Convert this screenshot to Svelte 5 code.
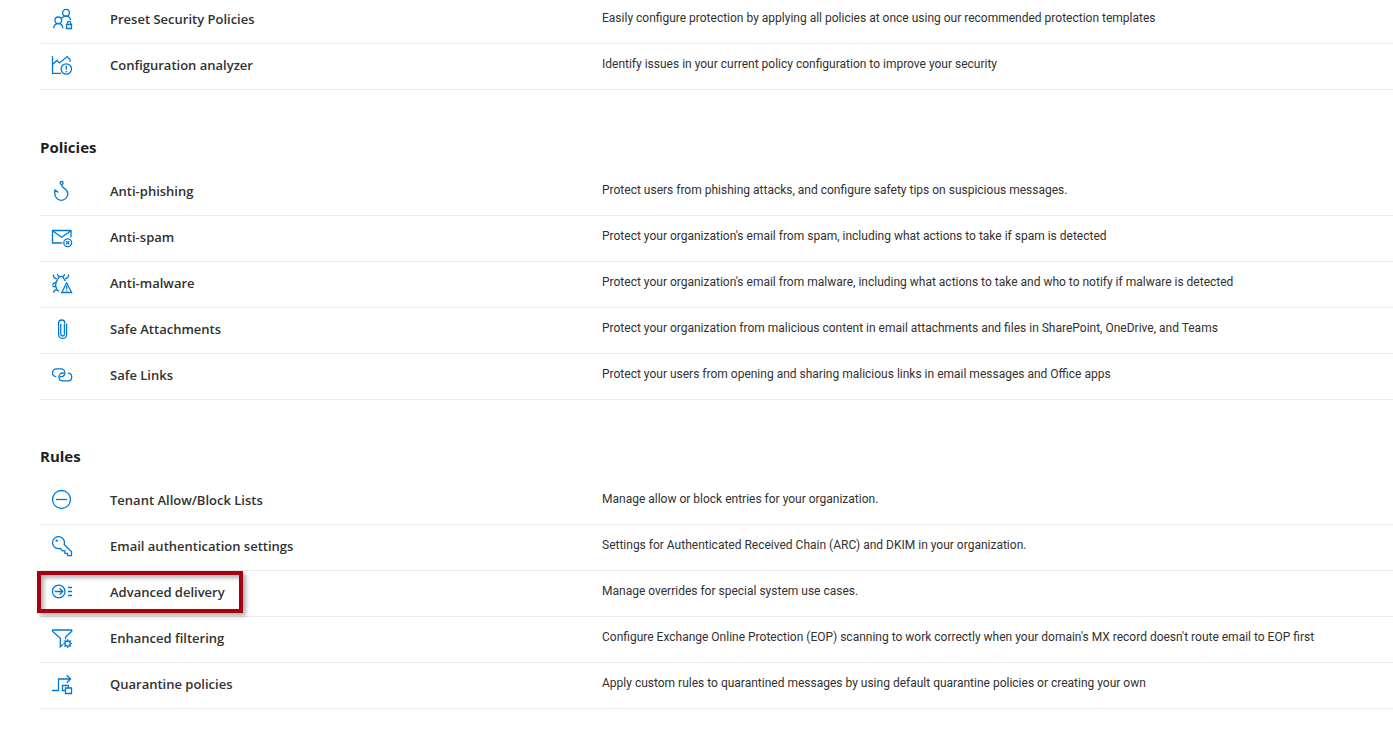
<script>
  const sections = [
    {
      title: "",
      rows: [
        { icon: "preset", name: "Preset Security Policies", text: "Easily configure protection by applying all policies at once using our recommended protection templates" },
        { icon: "analyzer", name: "Configuration analyzer", text: "Identify issues in your current policy configuration to improve your security" },
      ],
    },
    {
      title: "Policies",
      rows: [
        { icon: "hook", name: "Anti-phishing", text: "Protect users from phishing attacks, and configure safety tips on suspicious messages." },
        { icon: "mail", name: "Anti-spam", text: "Protect your organization's email from spam, including what actions to take if spam is detected" },
        { icon: "bug", name: "Anti-malware", text: "Protect your organization's email from malware, including what actions to take and who to notify if malware is detected" },
        { icon: "clip", name: "Safe Attachments", text: "Protect your organization from malicious content in email attachments and files in SharePoint, OneDrive, and Teams" },
        { icon: "link", name: "Safe Links", text: "Protect your users from opening and sharing malicious links in email messages and Office apps" },
      ],
    },
    {
      title: "Rules",
      rows: [
        { icon: "block", name: "Tenant Allow/Block Lists", text: "Manage allow or block entries for your organization." },
        { icon: "key", name: "Email authentication settings", text: "Settings for Authenticated Received Chain (ARC) and DKIM in your organization." },
        { icon: "delivery", name: "Advanced delivery", text: "Manage overrides for special system use cases.", marked: true },
        { icon: "filter", name: "Enhanced filtering", text: "Configure Exchange Online Protection (EOP) scanning to work correctly when your domain's MX record doesn't route email to EOP first" },
        { icon: "quarantine", name: "Quarantine policies", text: "Apply custom rules to quarantined messages by using default quarantine policies or creating your own" },
      ],
    },
  ];
</script>

{#snippet glyph(icon)}
  <svg class="icon" viewBox="0 0 24 24" aria-hidden="true">
    {#if icon === "preset"}
      <circle cx="16" cy="5.8" r="3.4" />
      <circle cx="8.3" cy="13.3" r="3.3" />
      <path d="M3.7 21.2c.2-2.9 2-4.6 4.6-4.6s4.4 1.700 4.6 4.600M11.600 11.400c.8-1.500 2.400-2.200 4.400-2.200 2.600 0 4.300 1.600 4.500 4" />
      <path d="M16.500 17.500h5v4h-5zM17.400 17.500v-1.500a1.600 1.600 0 0 1 3.200 0v1.500" />
    {:else if icon === "analyzer"}
      <path d="M2.500 3v17.400h8.500M2.700 11.300l4.300-3.900 2.400 2.500 7.800-6.300 2.900 3.200v2" />
      <circle cx="16.300" cy="16" r="5.200" />
      <path d="M16.300 12.800v4M16.300 18v1.300" />
    {:else if icon === "hook"}
      <circle cx="11.600" cy="4" r="1.500" />
      <path d="M11.600 5.500c.1 2.300 1.300 3 3.200 4.300 2 1.400 3 2.900 3 5a6.500 6.500 0 0 1-13 0v-4.300M4.900 10.800l3.400 2.800" />
    {:else if icon === "mail"}
      <path d="M12.300 18h-9.800v-12.500h18.500v7M2.500 5.700l9.300 6.600 9.200-6.600" />
      <circle cx="17.700" cy="17.700" r="3.900" />
      <path d="M16.100 16.100l3.200 3.200M19.300 16.100l-3.200 3.200" />
    {:else if icon === "bug"}
      <path d="M7.600 3c.1 1.300.7 2.200 1.700 2.600M14.500 3c-.1 1.300-.7 2.200-1.700 2.600M8.200 8c0-1.900 1-2.700 2.800-2.700s2.800.8 2.800 2.700" />
      <path d="M3.400 3.500c0 2.700.8 3.900 3.500 4.300M18.600 3.500c0 2.700-.8 3.900-3.500 4.300" />
      <path d="M8 8.200c-3.200 2.900-3.400 9 .9 12.300M5.900 11.600c-2 .1-3.100 1-3.100 2.700M5.700 15.500h-3.200M7.200 18.500c-2.300.2-3.600 1.200-3.600 3.200M14 8.200l1.500 1.700" />
      <path d="M16.700 12l4.900 9.500h-9.800zM16.700 15v3.300M16.700 19.200v1" />
    {:else if icon === "clip"}
      <path d="M14.800 6.400v-.3a3.100 3.100 0 0 0-6.200 0v11.300a4 4 0 0 0 8 0v-11M10.800 7v10.200a1.800 1.800 0 0 0 3.600 0v-10.500" />
    {:else if icon === "link"}
      <path d="M6.300 13.600c-2.200-.1-3.800-1.700-3.800-3.800 0-2.200 1.700-3.900 3.900-3.900h4.600c2.200 0 3.900 1.700 3.900 3.900s-1.700 3.800-3.900 3.800h-1.200" />
      <path d="M18 10.100c2.100.1 3.700 1.700 3.700 3.800 0 2.300-1.700 3.900-3.900 3.900h-4.900c-2.200 0-3.900-1.600-3.900-3.900 0-2.200 1.700-3.900 3.900-3.900h1" />
    {:else if icon === "block"}
      <circle cx="11.500" cy="11.500" r="9" />
      <path d="M6 11.500h11" />
    {:else if icon === "key"}
      <path d="M14.200 10.500l7.300 7.200v4h-4v-2.400h-2.600v-2.500h-2.500l-2-2.500a6 6 0 1 1 3.800-3.800z" />
      <circle class="dot" cx="6.800" cy="6.600" r="1.200" />
    {:else if icon === "delivery"}
      <circle cx="8.700" cy="11.500" r="6.300" />
      <path d="M4.600 11.500h8M9.500 8.200l3.300 3.300-3.300 3.300M18 7.500h4M18 11.500h4M18 15.500h4" />
    {:else if icon === "filter"}
      <path d="M12.800 18.500l-2.500 2.200v-8.400l-7.800-7v-1.300h19.200v1.300l-6.200 6v2" />
      <circle cx="17.600" cy="17.600" r="2.600" />
      <path d="M17.600 13.300v1.700M17.600 20.200v1.700M13.300 17.600h1.700M20.200 17.600h1.700M14.500 14.500l1.200 1.200M19.500 19.500l1.200 1.200M20.700 14.500l-1.200 1.200M15.700 19.500l-1.200 1.200" />
    {:else if icon === "quarantine"}
      <path d="M2 18.500h6.500v-11.500h12M16.700 3.200l3.900 3.800-3.900 3.800" />
      <path d="M15.500 18.500h-3v-5h6v2.500M15.500 16h6v5.500h-6z" />
    {/if}
  </svg>
{/snippet}

<main>
  {#each sections as section}
    <section>
      {#if section.title}
        <h2>{section.title}</h2>
      {/if}
      <table aria-label={section.title || "Templated policies"}>
        <tbody>
          {#each section.rows as row}
            <tr>
              <td class="icon-cell">
                {@render glyph(row.icon)}
                {#if row.marked}
                  <span class="marker"></span>
                {/if}
              </td>
              <td class="name"><a href="#{row.icon}">{row.name}</a></td>
              <td class="text">{row.text}</td>
            </tr>
          {/each}
        </tbody>
      </table>
    </section>
  {/each}
</main>

<style>
  :global(body) {
    background: #fff;
  }

  main {
    margin-top: -2px;
    padding-left: 40px;
    padding-bottom: 20px;
    font-family: "Segoe UI", "Open Sans", "Noto Sans", sans-serif;
    color: #323130;
    overflow: hidden;
  }

  section {
    padding-bottom: 44px;
  }

  section:first-child {
    padding-bottom: 45px;
  }

  section:last-child {
    padding-bottom: 0;
  }

  h2 {
    margin: 0;
    padding-bottom: 11px;
    font-size: 15px;
    line-height: 24px;
    font-weight: 700;
    color: #201f1e;
  }

  table {
    width: 100%;
    table-layout: fixed;
    border-collapse: separate;
    border-spacing: 0;
  }

  td {
    height: 45px;
    padding: 0;
    border-bottom: 1px solid #edebe9;
    vertical-align: top;
  }

  .icon-cell {
    position: relative;
    width: 70px;
  }

  .icon {
    display: block;
    width: 24px;
    height: 24px;
    margin: 9px 0 0 10px;
    fill: none;
    stroke: #0078d4;
    stroke-width: 1.3;
  }

  .dot {
    fill: #0078d4;
    stroke: none;
  }

  .name {
    width: 492px;
    padding-top: 11px;
    height: 34px;
    font-size: 13px;
    line-height: 20px;
    font-weight: 600;
  }

  .name a {
    color: inherit;
    text-decoration: none;
  }

  .name a:hover {
    text-decoration: underline;
  }

  .text {
    padding-top: 10px;
    height: 35px;
    font-family: "Segoe UI", Roboto, sans-serif;
    font-size: 12px;
    line-height: 20px;
    white-space: nowrap;
  }

  .marker {
    position: absolute;
    z-index: 1;
    top: 0;
    left: -3px;
    box-sizing: border-box;
    width: 206px;
    height: 42px;
    border: 4px solid #a80010;
    box-shadow: 3px 3px 4px rgba(0, 0, 0, 0.3), inset 3px 3px 4px rgba(0, 0, 0, 0.3);
    pointer-events: none;
  }
</style>
